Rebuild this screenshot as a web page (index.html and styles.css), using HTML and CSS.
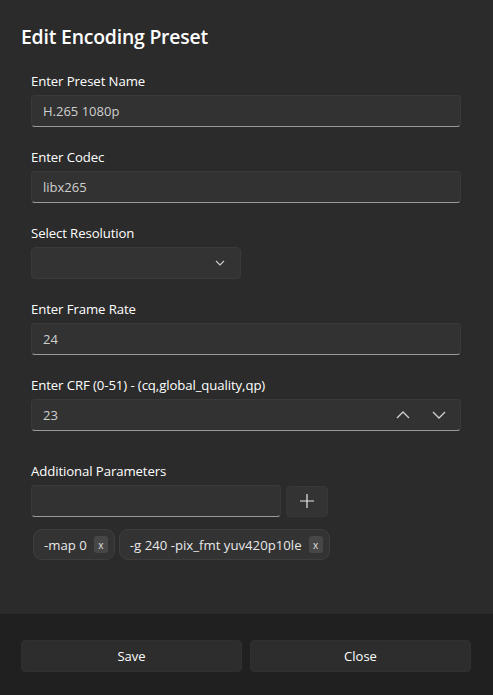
FILE: index.html
```html
<!DOCTYPE html>
<html>
<head>
<meta charset="utf-8">
<link rel="stylesheet" href="styles.css">
</head>
<body>
<div class="dialog">
  <div class="content">
    <h1 class="title">Edit Encoding Preset</h1>
    <div class="fields">
      <div class="field">
        <div class="label">Enter Preset Name</div>
        <div class="input"><span class="value">H.265 1080p</span></div>
      </div>
      <div class="field">
        <div class="label">Enter Codec</div>
        <div class="input"><span class="value">libx265</span></div>
      </div>
      <div class="field">
        <div class="label">Select Resolution</div>
        <div class="combo">
          <svg class="chev-small" width="10" height="6" viewBox="0 0 10 6"><path d="M1 1 L5 5 L9 1" fill="none" stroke="#cfcfcf" stroke-width="1.1"/></svg>
        </div>
      </div>
      <div class="field">
        <div class="label">Enter Frame Rate</div>
        <div class="input"><span class="value">24</span></div>
      </div>
      <div class="field">
        <div class="label">Enter CRF (0-51) - (cq,global_quality,qp)</div>
        <div class="input number">
          <span class="value">23</span>
          <div class="spin">
            <svg width="14" height="8" viewBox="0 0 14 8"><path d="M1 7 L7 1 L13 7" fill="none" stroke="#d0d0d0" stroke-width="1.3"/></svg>
            <svg width="14" height="8" viewBox="0 0 14 8"><path d="M1 1 L7 7 L13 1" fill="none" stroke="#d0d0d0" stroke-width="1.3"/></svg>
          </div>
        </div>
      </div>
      <div class="field params">
        <div class="label">Additional Parameters</div>
        <div class="add-row">
          <div class="input short"></div>
          <div class="plus">
            <svg width="16" height="16" viewBox="0 0 16 16"><path d="M8 1 V15 M1 8 H15" stroke="#e6e6e6" stroke-width="1.2"/></svg>
          </div>
        </div>
        <div class="tags">
          <div class="tag"><span>-map 0</span><span class="x">x</span></div>
          <div class="tag"><span>-g 240 -pix_fmt yuv420p10le</span><span class="x">x</span></div>
        </div>
      </div>
    </div>
  </div>
  <div class="footer">
    <button class="btn">Save</button>
    <button class="btn">Close</button>
  </div>
</div>
</body>
</html>
```
FILE: styles.css
```css
html, body {
  margin: 0;
  padding: 0;
  background: #2b2b2b;
}
body {
  font-family: "Open Sans", "Noto Sans", sans-serif;
  color: #ffffff;
  width: 493px;
  height: 695px;
  overflow: hidden;
}
.dialog {
  display: flex;
  flex-direction: column;
  height: 695px;
}
.content {
  flex: 1;
  padding: 23px 32px 0 21px;
  background: #2b2b2b;
}
.title {
  margin: 0;
  font-size: 19.4px;
  font-weight: 600;
  line-height: 28px;
  letter-spacing: -0.2px;
}
.fields {
  padding-left: 10px;
  margin-top: 20px;
  display: flex;
  flex-direction: column;
  gap: 20px;
}
.field {
  display: flex;
  flex-direction: column;
  gap: 4px;
}
.field.params {
  margin-top: 10px;
}
.label {
  font-size: 13.2px;
  line-height: 20px;
  color: #ffffff;
  letter-spacing: -0.1px;
}
.input {
  box-sizing: border-box;
  background: #323232;
  border: 1px solid #3a3a3a;
  border-bottom: 1px solid #9a9a9a;
  border-radius: 4px;
  display: flex;
  align-items: center;
  padding: 0 11px;
  font-size: 13px;
  color: #cfcfcf;
  height: 32px;
}
.number {
  justify-content: space-between;
  padding-right: 14px;
}
.spin {
  display: flex;
  gap: 22px;
  align-items: center;
}
.combo {
  width: 210px;
  height: 32px;
  box-sizing: border-box;
  background: #333333;
  border: 1px solid #3a3a3a;
  border-radius: 4px;
  display: flex;
  align-items: center;
  justify-content: flex-end;
  padding-right: 15px;
}
.add-row {
  display: flex;
  gap: 5px;
  align-items: center;
}
.input.short {
  width: 250px;
}
.plus {
  width: 42px;
  height: 31px;
  background: #333333;
  border: 1px solid #383838;
  box-sizing: border-box;
  border-radius: 4px;
  display: flex;
  align-items: center;
  justify-content: center;
}
.tags {
  display: flex;
  gap: 4px;
  margin-top: 8px;
  padding-left: 2px;
}
.tag {
  height: 31px;
  box-sizing: border-box;
  background: #333333;
  border: 1px solid #3e3e3e;
  border-radius: 9px;
  display: flex;
  align-items: center;
  gap: 7px;
  padding: 0 6px 0 10px;
  font-size: 13.2px;
  color: #e8e8e8;
}
.tag .x {
  background: #474747;
  border-radius: 3px;
  font-size: 10px;
  width: 14px;
  height: 17px;
  display: flex;
  align-items: center;
  justify-content: center;
  color: #e0e0e0;
  line-height: 1;
}
.footer {
  height: 81px;
  box-sizing: border-box;
  background: #202020;
  padding: 26px 22px 0 21px;
  display: flex;
  gap: 8px;
}
.btn {
  flex: 1;
  height: 32px;
  background: #2d2d2d;
  border: 1px solid #303030;
  border-radius: 4px;
  color: #ffffff;
  font-family: "Open Sans", "Noto Sans", sans-serif;
  font-size: 13px;
}
```
